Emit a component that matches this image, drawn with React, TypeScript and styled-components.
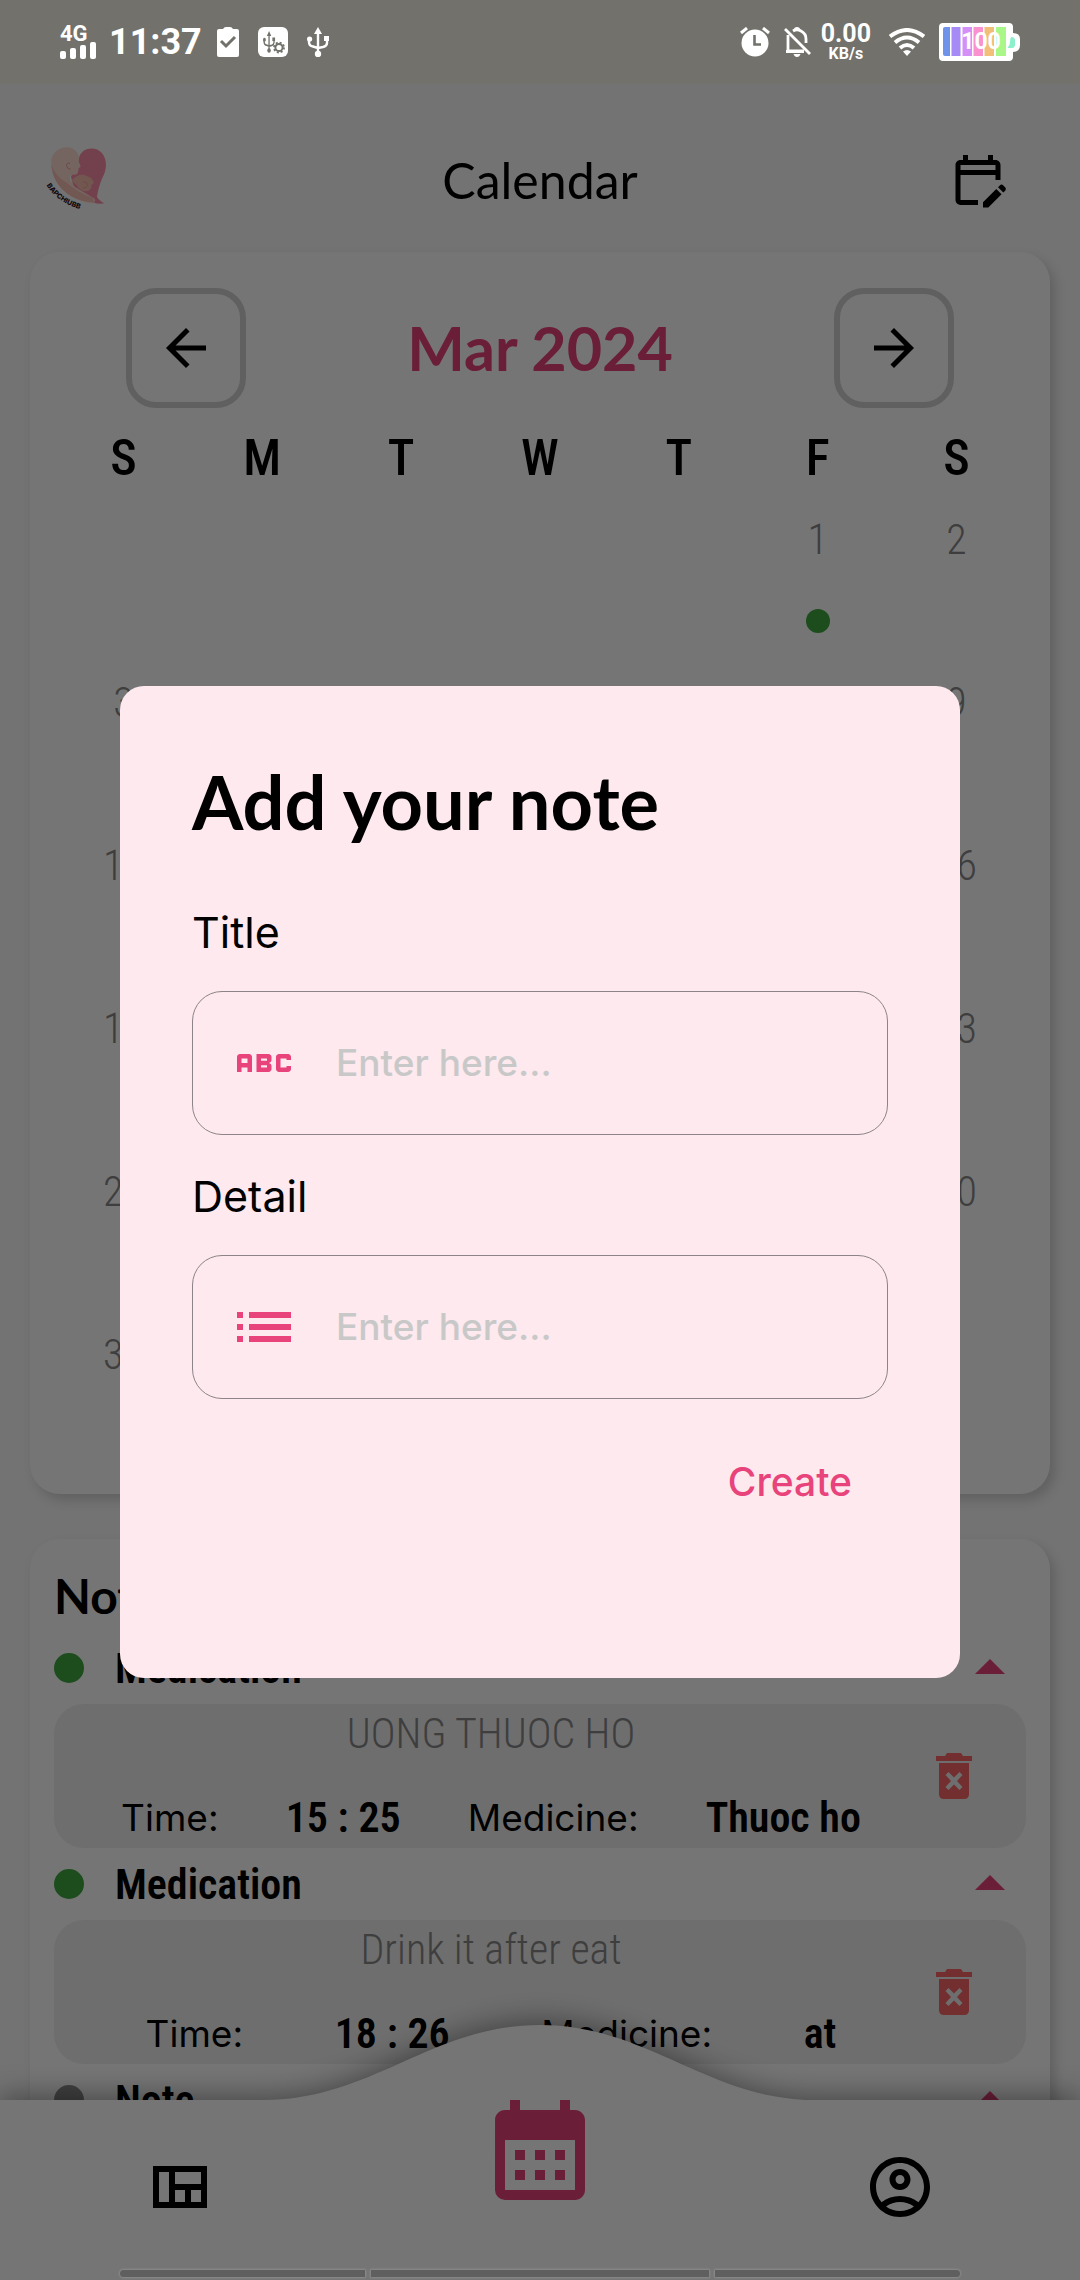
import React from "react";
import styled, { createGlobalStyle, css } from "styled-components";
import {
  MdAbc,
  MdArrowBack,
  MdArrowDropUp,
  MdArrowForward,
  MdCalendarMonth,
  MdList,
  MdOutlineAccountCircle,
  MdOutlineEditCalendar,
  MdOutlineViewQuilt,
} from "react-icons/md";

const color = {
  page: "#fafafa",
  card: "#ffffff",
  pink: "#e8437a",
  green: "#3fa83f",
  muted: "#888888",
  field: "#f0f0f0",
  danger: "#fa6666",
};

const font = {
  display: `"Lato", "Open Sans", sans-serif`,
  body: `"Inter", "Roboto", sans-serif`,
  narrow: `"Roboto Condensed", "Liberation Sans Narrow", "DejaVu Sans Condensed", sans-serif`,
  system: `"Roboto", sans-serif`,
};

const GlobalStyle = createGlobalStyle`
  * { box-sizing: border-box; }
  body { margin: 0; background: ${color.page}; font-family: ${font.body}; color: #000; }
  button { border: 0; padding: 0; margin: 0; background: none; color: inherit; font: inherit; cursor: pointer; }
  svg { display: block; }
`;

const Screen = styled.div`
  height: 100vh;
  overflow: hidden;
  display: flex;
  flex-direction: column;
`;

/* Status bar */

const StatusBar = styled.div`
  position: relative;
  z-index: 3;
  flex: none;
  height: 84px;
  padding: 0 60px;
  display: flex;
  align-items: center;
  justify-content: space-between;
  background: #72716b;
  color: #fff;
  font-family: ${font.system};
  font-weight: 700;
`;

const StatusGroup = styled.div<{ $gap: number }>`
  display: flex;
  align-items: center;
  gap: ${(p) => p.$gap}px;
`;

const Clock = styled.time`
  margin: 0 -4px 0 -6px;
  font-size: 36px;
  line-height: 36px;
`;

const Network = styled.div`
  width: 36px;
  display: flex;
  flex-direction: column;
  font-size: 22px;
  line-height: 16px;
`;

const Speed = styled.div`
  display: flex;
  flex-direction: column;
  align-items: center;
  margin: 0 4px 0 -4px;
  font-size: 25px;
  line-height: 24px;
  small {
    font-size: 16px;
    line-height: 16px;
  }
`;

/* Header */

const Header = styled.header`
  flex: none;
  height: 168px;
  padding: 24px 72px 0 40px;
  display: grid;
  grid-template-columns: 1fr auto 1fr;
  align-items: center;
`;

const HeaderTitle = styled.h1`
  margin: 0;
  padding-left: 32px;
  font-family: ${font.display};
  font-weight: 400;
  font-size: 50px;
  line-height: 60px;
`;

const HeaderAction = styled.button`
  justify-self: end;
`;

/* Cards */

const Card = styled.section`
  flex: none;
  margin: 0 30px;
  border-radius: 30px;
  background: ${color.card};
  box-shadow: 5px 6px 12px rgba(0, 0, 0, 0.16);
`;

const CalendarCard = styled(Card)`
  padding: 36px 24px 16px;
`;

const MonthBar = styled.div`
  display: flex;
  align-items: center;
  justify-content: space-between;
  padding: 0 72px;
`;

const MonthButton = styled.button`
  width: 120px;
  height: 120px;
  display: grid;
  place-items: center;
  border: 6px solid #d1d1d1;
  border-radius: 30px;
`;

const Month = styled.h2`
  margin: 0;
  font-family: ${font.display};
  font-weight: 700;
  font-size: 61px;
  line-height: 72px;
  color: ${color.pink};
`;

const MonthTable = styled.table`
  width: 100%;
  table-layout: fixed;
  border-collapse: collapse;
  font-family: ${font.narrow};
  text-align: center;
`;

const Weekday = styled.th`
  height: 92px;
  padding: 8px 0 0;
  font-size: 50px;
  line-height: 60px;
  font-weight: 500;
`;

const Day = styled.td`
  height: 163px;
  padding: 16px 0 0;
  vertical-align: top;
  font-size: 42px;
  font-weight: 300;
  line-height: 48px;
  color: ${color.muted};
`;

const Dot = styled.span<{ $size: number; $color: string }>`
  display: block;
  width: ${(p) => p.$size}px;
  height: ${(p) => p.$size}px;
  border-radius: 50%;
  background: ${(p) => p.$color};
`;

const DayDot = styled(Dot)`
  margin: 45px auto 0;
`;

const NotesCard = styled(Card)`
  margin-top: 45px;
  padding: 21px 24px;
`;

const NotesTitle = styled.h2`
  margin: 0;
  font-family: ${font.display};
  font-weight: 700;
  font-size: 48px;
  line-height: 72px;
`;

const NoteHead = styled.div`
  display: grid;
  grid-template-columns: 30px 1fr 72px;
  column-gap: 31px;
  align-items: center;
  height: 72px;
  font-family: ${font.narrow};
  font-weight: 600;
  font-size: 42px;
`;

const Toggle = styled.button`
  color: ${color.pink};
`;

const NoteBody = styled.div`
  display: flex;
  align-items: center;
  gap: 8px;
  height: 144px;
  padding-right: 54px;
  border-radius: 30px;
  background: ${color.field};
`;

const NoteText = styled.div`
  flex: 1;
  height: 100%;
  display: flex;
  flex-direction: column;
  justify-content: space-between;
`;

const NoteTitle = styled.p`
  margin: 0;
  text-align: center;
  font-family: ${font.narrow};
  font-weight: 300;
  font-size: 42px;
  line-height: 60px;
  color: ${color.muted};
`;

const NoteRow = styled.dl`
  margin: 0;
  display: flex;
  justify-content: space-evenly;
  line-height: 60px;
  dt {
    font-size: 37px;
  }
  dd {
    margin: 0;
    font-family: ${font.narrow};
    font-weight: 600;
    font-size: 42px;
  }
`;

/* Bottom navigation */

const Nav = styled.nav`
  position: fixed;
  left: 0;
  right: 0;
  bottom: 0;
  z-index: 1;
  height: 180px;
  padding-bottom: 6px;
  display: grid;
  grid-template-columns: 1fr 1fr 1fr;
`;

const NavShape = styled.svg`
  position: absolute;
  left: 0;
  bottom: 0;
  width: 100%;
  height: 255px;
  overflow: visible;
  filter: drop-shadow(0 -3px 15px rgba(0, 0, 0, 0.42));
`;

const NavItem = styled.button<{ $active?: boolean }>`
  position: relative;
  display: grid;
  place-items: center;
  ${(p) =>
    p.$active &&
    css`
      color: ${color.pink};
      place-items: start center;
      margin-top: -10px;
    `}
`;

const HomeBar = styled.div`
  position: fixed;
  left: 0;
  right: 0;
  bottom: 3px;
  z-index: 3;
  display: grid;
  grid-template-columns: 8fr 11fr 8fr;
  gap: 6px;
  padding: 0 120px;
`;

const HomeSegment = styled.span`
  height: 7px;
  background: #5f5f5f;
  box-shadow: 0 0 2px 1px #8c8c8c;
  &:first-child {
    border-radius: 4px 0 0 4px;
  }
  &:last-child {
    border-radius: 0 4px 4px 0;
  }
`;

/* Dialog */

const Backdrop = styled.div`
  position: fixed;
  inset: 0;
  z-index: 2;
  display: grid;
  grid-template-columns: minmax(0, 1fr);
  align-items: center;
  padding: 84px 120px 0;
  background: rgba(0, 0, 0, 0.54);
`;

const Dialog = styled.form`
  padding: 68px 72px 157px;
  border-radius: 24px;
  background: #fde9ee;
  display: flex;
  flex-direction: column;
`;

const DialogTitle = styled.h2`
  margin: 0 0 40px;
  font-family: ${font.display};
  font-weight: 700;
  font-size: 74px;
  line-height: 96px;
`;

const Label = styled.label`
  font-size: 43px;
  line-height: 84px;
`;

const Field = styled.div`
  display: flex;
  align-items: center;
  gap: 36px;
  height: 144px;
  margin: 17px 0 19px;
  padding: 0 35px;
  border: 1px solid #8c8488;
  border-radius: 30px;
  color: ${color.pink};
  svg {
    flex: none;
  }
`;

const TextBox = styled.input`
  flex: 1;
  min-width: 0;
  padding: 0;
  border: 0;
  outline: 0;
  background: none;
  font-family: ${font.body};
  font-weight: 500;
  font-size: 37px;
  line-height: 48px;
  &::placeholder {
    color: #c8c8c8;
    opacity: 1;
  }
`;

const CreateButton = styled.button`
  align-self: flex-end;
  && {
    margin: 25px 36px 0 0;
    font-weight: 500;
    font-size: 39px;
    line-height: 78px;
    color: ${color.pink};
  }
`;

/* Drawings */

const SignalBars = () => (
  <svg width="36" height="17" viewBox="0 0 36 17" fill="#fff">
    <rect x="0" y="9" width="6" height="8" rx="2" />
    <rect x="10" y="6" width="6" height="11" rx="2" />
    <rect x="20" y="3" width="6" height="14" rx="2" />
    <rect x="30" y="0" width="6" height="17" rx="2" />
  </svg>
);

const ClipboardCheck = () => (
  <svg width="22" height="30" viewBox="0 0 22 30">
    <path d="M2 2h4q1-2 3-2h4q2 0 3 2h4q2 0 2 2v24q0 2-2 2H2q-2 0-2-2V4q0-2 2-2z" fill="#fff" />
    <path d="M4 14l5 5 9-9" fill="none" stroke="#72716b" strokeWidth="3" />
  </svg>
);

const UsbGlyph = ({ tint }: { tint: string }) => (
  <g fill="none" stroke={tint} strokeWidth="2.4">
    <path d="M11 4v24M2 12v3q0 4 4 4.500l5 1.500M20 12v4q0 3-4 4l-5 1" />
    <path d="M11 0l4 7H7z" fill={tint} stroke="none" />
    <circle cx="2.600" cy="12" r="2.600" fill={tint} stroke="none" />
    <circle cx="11" cy="27" r="3.200" fill={tint} stroke="none" />
    <path d="M17 9h5v5h-5z" fill={tint} stroke="none" />
  </g>
);

const UsbIcon = () => (
  <svg width="22" height="30" viewBox="0 0 22 30">
    <UsbGlyph tint="#fff" />
  </svg>
);

const UsbSettings = () => (
  <svg width="30" height="30" viewBox="0 0 30 30">
    <rect width="30" height="30" rx="6" fill="#fff" />
    <g transform="translate(5 4) scale(.55 .72)">
      <UsbGlyph tint="#72716b" />
    </g>
    <circle cx="21" cy="20.500" r="3.600" fill="#fff" stroke="#72716b" strokeWidth="2" />
    <circle cx="21" cy="20.500" r="5" fill="none" stroke="#72716b" strokeWidth="1.800" strokeDasharray="2 1.930" />
  </svg>
);

const AlarmIcon = () => (
  <svg width="30" height="30" viewBox="0 0 30 30">
    <circle cx="15" cy="16" r="13.500" fill="#fff" />
    <path d="M1 6l6-5M29 6l-6-5" stroke="#fff" strokeWidth="3" />
    <path d="M14.500 8v9.500H21" fill="none" stroke="#72716b" strokeWidth="2.600" />
  </svg>
);

const BellOff = () => (
  <svg width="27" height="30" viewBox="0 0 27 30" fill="none" stroke="#fff" strokeWidth="2.800">
    <path d="M1 2l25 25" />
    <path d="M4 8v16h16M2 24.500h18M9 4q4-2.500 8 0 5 2.500 5 8v4" />
    <path d="M9.500 27h7q-1 3-3.500 3t-3.500-3z" fill="#fff" stroke="none" />
    <path d="M10 3q0-3 3-3t3 3z" fill="#fff" stroke="none" />
  </svg>
);

const WifiIcon = () => (
  <svg width="36" height="28" viewBox="0 0 36 28" fill="none" stroke="#fff" strokeWidth="4">
    <path d="M1 8.500q17-13 34 0" />
    <path d="M6 14.500q12-10 24 0" />
    <path d="M11 20q7-6 14 0" />
    <path d="M14 23.500q4-3 8 0l-4 4.500z" fill="#fff" stroke="none" />
  </svg>
);

const Battery = () => (
  <svg width="81" height="38" viewBox="0 0 81 38">
    <path d="M4 0h66q4 0 4 4v6q7 0 7 6v6q0 7-7 7v5q0 4-4 4H4q-4 0-4-4V4q0-4 4-4z" fill="#fff" />
    <path d="M4 6q0-2 2-2h5v29H6q-2 0-2-2z" fill="#6f93ea" />
    <rect x="12.500" y="4" width="9" height="29" fill="#a68af5" />
    <rect x="23.500" y="4" width="9.500" height="29" fill="#d490f7" />
    <rect x="34.500" y="4" width="9.500" height="29" fill="#fa92cf" />
    <rect x="45.500" y="4" width="9.500" height="29" fill="#f2bf78" />
    <rect x="57" y="4" width="10" height="29" fill="#a9f788" />
    <path d="M69 24q2-2 2-5t1-5q4 0 4 3v4q0 4-3 4h-4z" fill="#8df0cd" />
    <text x="42" y="26" textAnchor="middle" fill="#fff" fontFamily="Roboto, sans-serif" fontWeight="700" fontSize="23">
      100
    </text>
  </svg>
);

const Logo = () => (
  <svg width="72" height="72" viewBox="0 0 216 216" role="img" aria-label="Logo">
    <path d="M117 42c8-34 50-36 68-16 20 24 14 54 2 76-10 22-14 46-16 56q4 10 22 20c-30 6-60-10-90-40l-10-40z" fill="#fb8ca8" />
    <path d="M34 58C28 20 84-8 110 24c8 10 8 22 6 28l6 16-6 4-2 14q-4 8-14 6l-10 2v14l14 20 60 36q4 14-10 14C100 172 40 130 34 58z" fill="#ffdcd2" />
    <path d="M34 60q10 36 48 58 28 26 76 44l4 12C100 176 36 130 34 60z" fill="#f9bfb4" />
    <path d="M94 110q24-26 46-14 16 4 22 20l-8 8q4 12-14 18-20 0-30-18z" fill="#f8bdae" />
    <path d="M90 58q-12-2-10 8t12 10M130 116q10-6 12 6-2 12-12 10" fill="none" stroke="#e6a498" strokeWidth="3" />
    <path id="logo-arc" d="M20 124q30 50 106 74" fill="none" />
    <text fill="#330f12" fontFamily="Inter, sans-serif" fontWeight="800" fontSize="21">
      <textPath href="#logo-arc">BAPCHIUBB</textPath>
    </text>
  </svg>
);

const TrashIcon = () => (
  <svg width="36" height="46" viewBox="0 0 36 46" fill={color.danger}>
    <path d="M0 3h9l2-3h14l2 3h9v5H0z" />
    <path
      fillRule="evenodd"
      d="M3 10h30v31q0 5-5 5H8q-5 0-5-5zM12.500 19L9.500 22l5.500 6-5.500 6 3 3 5.500-5.500 5.500 5.500 3-3-5.500-6 5.500-6-3-3-5.500 5.500z"
    />
  </svg>
);

/* Data */

const weekdays = ["S", "M", "T", "W", "T", "F", "S"];
const firstWeekday = 5;
const daysInMonth = 31;
const markedDays = [1];

const weeks = Array.from({ length: 6 }, (_, w) =>
  Array.from({ length: 7 }, (_, d) => {
    const n = w * 7 + d - firstWeekday + 1;
    return n >= 1 && n <= daysInMonth ? n : null;
  })
);

type Note = { kind: string; tint: string; title?: string; time?: string; medicine?: string };

const notes: Note[] = [
  { kind: "Medication", tint: color.green, title: "UONG THUOC HO", time: "15 : 25", medicine: "Thuoc ho" },
  { kind: "Medication", tint: color.green, title: "Drink it after eat", time: "18 : 26", medicine: "at" },
  { kind: "Note", tint: "#8c8c8c" },
];

const NoteItem = ({ note }: { note: Note }) => (
  <article>
    <NoteHead>
      <Dot $size={30} $color={note.tint} />
      <span>{note.kind}</span>
      <Toggle type="button" aria-label="Collapse">
        <MdArrowDropUp size={72} />
      </Toggle>
    </NoteHead>
    {note.title && (
      <NoteBody>
        <NoteText>
          <NoteTitle>{note.title}</NoteTitle>
          <NoteRow>
            <dt>Time:</dt>
            <dd>{note.time}</dd>
            <dt>Medicine:</dt>
            <dd>{note.medicine}</dd>
          </NoteRow>
        </NoteText>
        <button type="button" aria-label="Delete">
          <TrashIcon />
        </button>
      </NoteBody>
    )}
  </article>
);

export default function App() {
  return (
    <>
      <GlobalStyle />
      <Screen>
        <StatusBar>
          <StatusGroup $gap={19}>
            <Network>
              4G
              <SignalBars />
            </Network>
            <Clock>11:37</Clock>
            <ClipboardCheck />
            <UsbSettings />
            <UsbIcon />
          </StatusGroup>
          <StatusGroup $gap={14}>
            <AlarmIcon />
            <BellOff />
            <Speed>
              0.00
              <small>KB/s</small>
            </Speed>
            <WifiIcon />
            <Battery />
          </StatusGroup>
        </StatusBar>

        <Header>
          <Logo />
          <HeaderTitle>Calendar</HeaderTitle>
          <HeaderAction type="button" aria-label="Edit calendar">
            <MdOutlineEditCalendar size={60} />
          </HeaderAction>
        </Header>

        <CalendarCard>
          <MonthBar>
            <MonthButton type="button" aria-label="Previous month">
              <MdArrowBack size={60} />
            </MonthButton>
            <Month>Mar 2024</Month>
            <MonthButton type="button" aria-label="Next month">
              <MdArrowForward size={60} />
            </MonthButton>
          </MonthBar>
          <MonthTable>
            <thead>
              <tr>
                {weekdays.map((d, i) => (
                  <Weekday key={i} scope="col">
                    {d}
                  </Weekday>
                ))}
              </tr>
            </thead>
            <tbody>
              {weeks.map((week, w) => (
                <tr key={w}>
                  {week.map((day, d) => (
                    <Day key={d}>
                      {day}
                      {day !== null && markedDays.includes(day) && <DayDot $size={24} $color={color.green} />}
                    </Day>
                  ))}
                </tr>
              ))}
            </tbody>
          </MonthTable>
        </CalendarCard>

        <NotesCard>
          <NotesTitle>Notes</NotesTitle>
          {notes.map((note, i) => (
            <NoteItem key={i} note={note} />
          ))}
        </NotesCard>
      </Screen>

      <Nav>
        <NavShape viewBox="0 0 1080 255" preserveAspectRatio="none" aria-hidden="true">
          <path d="M0 75H264C372 75 432 0 540 0S708 75 816 75H1080V255H0Z" fill={color.card} />
        </NavShape>
        <NavItem type="button" aria-label="Dashboard">
          <MdOutlineViewQuilt size={72} />
        </NavItem>
        <NavItem type="button" aria-label="Calendar" $active>
          <MdCalendarMonth size={120} />
        </NavItem>
        <NavItem type="button" aria-label="Profile">
          <MdOutlineAccountCircle size={72} />
        </NavItem>
      </Nav>

      <Backdrop>
        <Dialog role="dialog" aria-labelledby="dialog-title" onSubmit={(e) => e.preventDefault()}>
          <DialogTitle id="dialog-title">Add your note</DialogTitle>
          <Label htmlFor="note-title">Title</Label>
          <Field>
            <MdAbc size={72} />
            <TextBox id="note-title" type="text" placeholder="Enter here..." />
          </Field>
          <Label htmlFor="note-detail">Detail</Label>
          <Field>
            <MdList size={72} />
            <TextBox id="note-detail" type="text" placeholder="Enter here..." />
          </Field>
          <CreateButton type="submit">Create</CreateButton>
        </Dialog>
      </Backdrop>

      <HomeBar>
        <HomeSegment />
        <HomeSegment />
        <HomeSegment />
      </HomeBar>
    </>
  );
}
